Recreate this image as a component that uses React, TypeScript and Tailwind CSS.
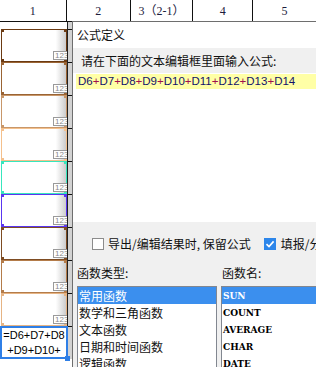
const cjk = "font-['Noto_Sans_CJK_SC','Noto_Sans',sans-serif]";

const rows = [
  { border: "border-[#6b3a12]", dot: "bg-[#6b3a12]" },
  { border: "border-[#9a6434]", dot: "bg-[#9a6434]" },
  { border: "border-[#c8976a]", dot: "bg-[#c8976a]" },
  { border: "border-[#f4c08c]", dot: "bg-[#f4c08c]" },
  { border: "border-[#38e6bd]", dot: "bg-[#38e6bd]" },
  { border: "border-[#5a36f0]", dot: "bg-[#5a36f0]" },
  { border: "border-[#7e4c22]", dot: "bg-[#7e4c22]" },
  { border: "border-[#b47c4a]", dot: "bg-[#b47c4a]" },
  { border: "border-[#e6b484]", dot: "bg-[#e6b484]" },
];

const categories = ["常用函数", "数学和三角函数", "文本函数", "日期和时间函数", "逻辑函数"];
const functions = ["SUN", "COUNT", "AVERAGE", "CHAR", "DATE"];
const formula = ["D6", "D7", "D8", "D9", "D10", "D11", "D12", "D13", "D14"];

function Strip({ tick = true }: { tick?: boolean }) {
  return (
    <>
      <div className="w-px bg-[#222]" />
      <div className={`w-[4px] bg-[#d2d2d2] ${tick ? "border-t border-[#111]" : ""}`} />
    </>
  );
}

function SheetRow({ border, dot }: { border: string; dot: string }) {
  return (
    <div className="flex h-[33px]">
      <div className="w-[67px] overflow-hidden pl-px">
        <div
          className={`relative h-full border bg-[linear-gradient(to_right,#ffffff_84%,#cccccc)] ${border}`}
        >
          <span className={`absolute -left-px -top-px h-[3px] w-[3px] ${dot}`} />
          <span className={`absolute -right-px -top-px h-[3px] w-[3px] ${dot}`} />
          <span className={`absolute -bottom-px -left-px h-[3px] w-[3px] ${dot}`} />
          <span className={`absolute -bottom-px -right-px h-[3px] w-[3px] ${dot}`} />
          <div className="absolute -right-[3px] bottom-[1px] flex h-[9px] w-[16px] items-center overflow-hidden border border-[#9a9a9a] bg-white pl-px font-['Liberation_Sans',sans-serif] text-[8px] leading-none text-[#8a8a8a]">
            123
          </div>
        </div>
      </div>
      <Strip />
    </div>
  );
}

function CheckBox({ checked }: { checked?: boolean }) {
  if (checked)
    return (
      <div className="flex h-[12px] w-[12px] shrink-0 items-center justify-center bg-[#2d86ea]">
        <svg width="10" height="10" viewBox="0 0 10 10">
          <path d="M1.5 5.2 L4 7.6 L8.6 2.4" fill="none" stroke="white" strokeWidth="1.6" />
        </svg>
      </div>
    );
  return <div className="h-[12px] w-[12px] shrink-0 border border-[#8c8c8c] bg-white" />;
}

export default function App() {
  return (
    <div className={`relative h-[367px] w-[316px] overflow-hidden bg-white ${cjk}`}>
      {/* column header */}
      <div className="flex h-[22px] border-b border-[#111] font-['Liberation_Serif','Noto_Sans_CJK_SC',serif] text-[12px] text-[#1c1c3c]">
        <div className="flex w-[68px] items-center justify-center border-r border-[#111]">1</div>
        <div className="flex w-[65px] items-center justify-center border-r border-[#111]">2</div>
        <div className="flex w-[64px] items-center justify-center border-r border-[#111]">3（2-1）</div>
        <div className="flex w-[61px] items-center justify-center border-r border-[#111]">4</div>
        <div className="flex w-[64px] items-center justify-center">5</div>
      </div>

      {/* first column cells */}
      <div className="flex h-[7px]">
        <div className="w-[67px]" />
        <Strip tick={false} />
      </div>
      {rows.map((r, i) => (
        <SheetRow key={i} border={r.border} dot={r.dot} />
      ))}
      <div className="flex h-[33px]">
        <div className="relative flex w-[68px] flex-col items-center justify-center border-2 border-[#2f7fe6] font-['Liberation_Sans',sans-serif] text-[11px] leading-[15px] text-black">
          <span>=D6+D7+D8</span>
          <span>+D9+D10+</span>
          <span className="absolute -bottom-[4px] -right-[4px] h-[5px] w-[5px] bg-[#2f7fe6]" />
        </div>
        <div className="w-[4px] border-t border-[#111] bg-[#d2d2d2]" />
      </div>

      {/* formula dialog */}
      <div className="absolute left-[72px] top-[21px] h-[360px] w-[260px] border-l border-t border-[#6e6e6e] bg-[#f0f0f0] text-[12px] text-[#111]">
        <div className="flex h-[26px] items-center bg-white pl-[4px]">公式定义</div>
        <div className="flex h-[25px] items-center pl-[8px]">请在下面的文本编辑框里面输入公式:</div>
        <div className="h-[149px] bg-white pl-[3px] pt-px">
          <div className="flex h-[15px] items-center bg-[#ffffa6] pl-[2px] font-['Liberation_Sans',sans-serif] text-[11.5px]">
            {formula.map((d, i) => (
              <span key={d}>
                {i > 0 && <span className="text-[#a0104e]">+</span>}
                <span className="text-[#12126a]">{d}</span>
              </span>
            ))}
          </div>
        </div>

        <div className="mt-[16px] flex h-[12px] items-center pl-[19px]">
          <CheckBox />
          <span className="ml-[4px] whitespace-nowrap">导出/编辑结果时, 保留公式</span>
          <div className="ml-[13px] shrink-0">
            <CheckBox checked />
          </div>
          <span className="ml-[5px] whitespace-nowrap">填报/分析时, 保留公式</span>
        </div>

        <div className="mt-[15px] flex h-[16px] items-center">
          <span className="w-[148px] pl-[4px]">函数类型:</span>
          <span className="pl-px">函数名:</span>
        </div>

        <div className="mt-[5px] flex gap-[4px] pl-[4px]">
          <div className="h-[90px] w-[140px] border border-[#828790] bg-white">
            {categories.map((c, i) => (
              <div
                key={c}
                className={`flex h-[17px] items-center pl-px ${i === 0 ? "bg-[#3b8fee] text-white" : ""}`}
              >
                {c}
              </div>
            ))}
          </div>
          <div className="h-[90px] flex-1 border border-[#828790] bg-white font-['DejaVu_Serif',serif] text-[10px] font-bold font-stretch-condensed">
            {functions.map((f, i) => (
              <div
                key={f}
                className={`flex h-[17px] items-center pl-px ${i === 0 ? "bg-[#3b8fee] text-white" : "text-black"}`}
              >
                {f}
              </div>
            ))}
          </div>
        </div>
      </div>
    </div>
  );
}
